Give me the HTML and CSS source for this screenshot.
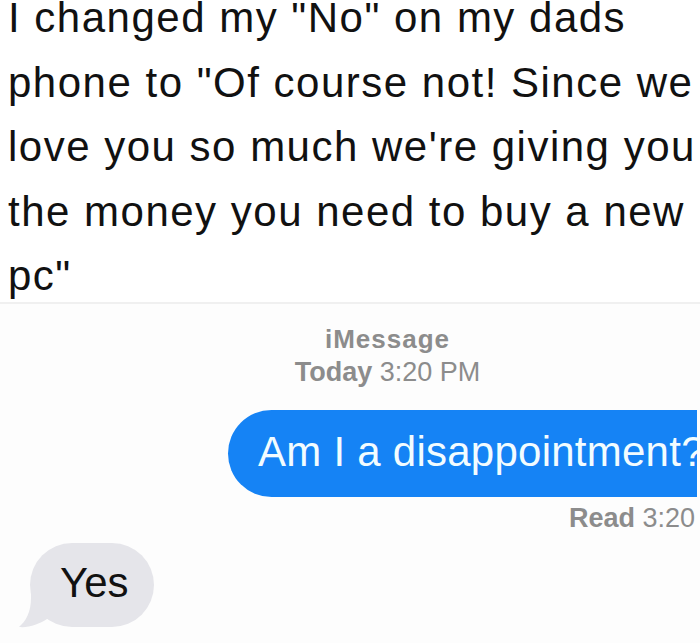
FILE: index.html
```html
<!DOCTYPE html>
<html lang="en">

<head>
    <meta charset="UTF-8">
    <meta name="viewport" content="width=device-width, initial-scale=1.0">
    <title>iMessage</title>
    <link rel="stylesheet" href="styles.css">
</head>

<body>
    <!--legende au dessus de la capture-->
    <div class="caption">
        <p>I changed my "No" on my dads<br>
            phone to "Of course not! Since we<br>
            love you so much we're giving you<br>
            the money you need to buy a new<br>
            pc"</p>
    </div>
    <!--capture de la conversation-->
    <div class="chat">
        <div class="meta">
            <div class="meta-title">iMessage</div>
            <div class="meta-time"><b>Today</b> 3:20 PM</div>
        </div>
        <div class="row-sent">
            <div class="bubble-sent">Am I a disappointment?</div>
        </div>
        <div class="read"><b>Read</b> 3:20</div>
        <div class="row-recv">
            <div class="bubble-recv">
                Yes
                <svg class="tail" width="40" height="42" viewBox="0 0 40 42">
                    <path d="M14 0 L14 12 C14 26 9 35 2 41 C12 42 22 38 30 33 L40 33 L40 0 Z" fill="#e5e5ea" />
                </svg>
            </div>
        </div>
    </div>
</body>

</html>
```

FILE: styles.css
```css
body {
    font-family: "Liberation Sans", Arial, sans-serif;
    margin: 0;
    padding: 0;
    background-color: white;
    overflow: hidden;
}

.caption {
    display: flow-root;
    height: 302px;
    padding-left: 8px;
    color: #111;
}

.caption p {
    margin: -14px 0 0;
    font-size: 42px;
    line-height: 64.5px;
    letter-spacing: 1.5px;
    white-space: nowrap;
}

.chat {
    border-top: 2px solid #f0f0f0;
    background-color: #fdfdfd;
    height: 339px;
}

.meta {
    text-align: center;
    color: #8c8c8c;
    line-height: 33px;
    padding: 19px 0 0 75px;
}

.meta-title {
    font-size: 26px;
    font-weight: bold;
    letter-spacing: 1px;
}

.meta-time {
    font-size: 27px;
}

.row-sent {
    display: flex;
    justify-content: flex-end;
    margin-top: 21px;
}

.bubble-sent {
    background-color: #1583f5;
    color: #f2fcff;
    font-size: 42px;
    letter-spacing: 0.25px;
    height: 83px;
    line-height: 83px;
    padding: 0 0 4px 30px;
    border-radius: 44px 0 0 44px;
    width: 439px;
    white-space: nowrap;
    overflow: hidden;
    margin-right: 3px;
}

.read {
    text-align: right;
    color: #8c8c8c;
    font-size: 27px;
    line-height: 33px;
    padding-right: 5px;
    margin-top: 5px;
}

.row-recv {
    display: flex;
    margin-top: 8px;
    padding-left: 30px;
}

.bubble-recv {
    position: relative;
    background-color: #e5e5ea;
    border-radius: 42px;
    font-size: 42px;
    color: #111;
    padding: 0 25px 5px 30px;
    height: 79px;
    line-height: 79px;
}

.tail {
    position: absolute;
    left: -13px;
    bottom: -1px;
}
```
